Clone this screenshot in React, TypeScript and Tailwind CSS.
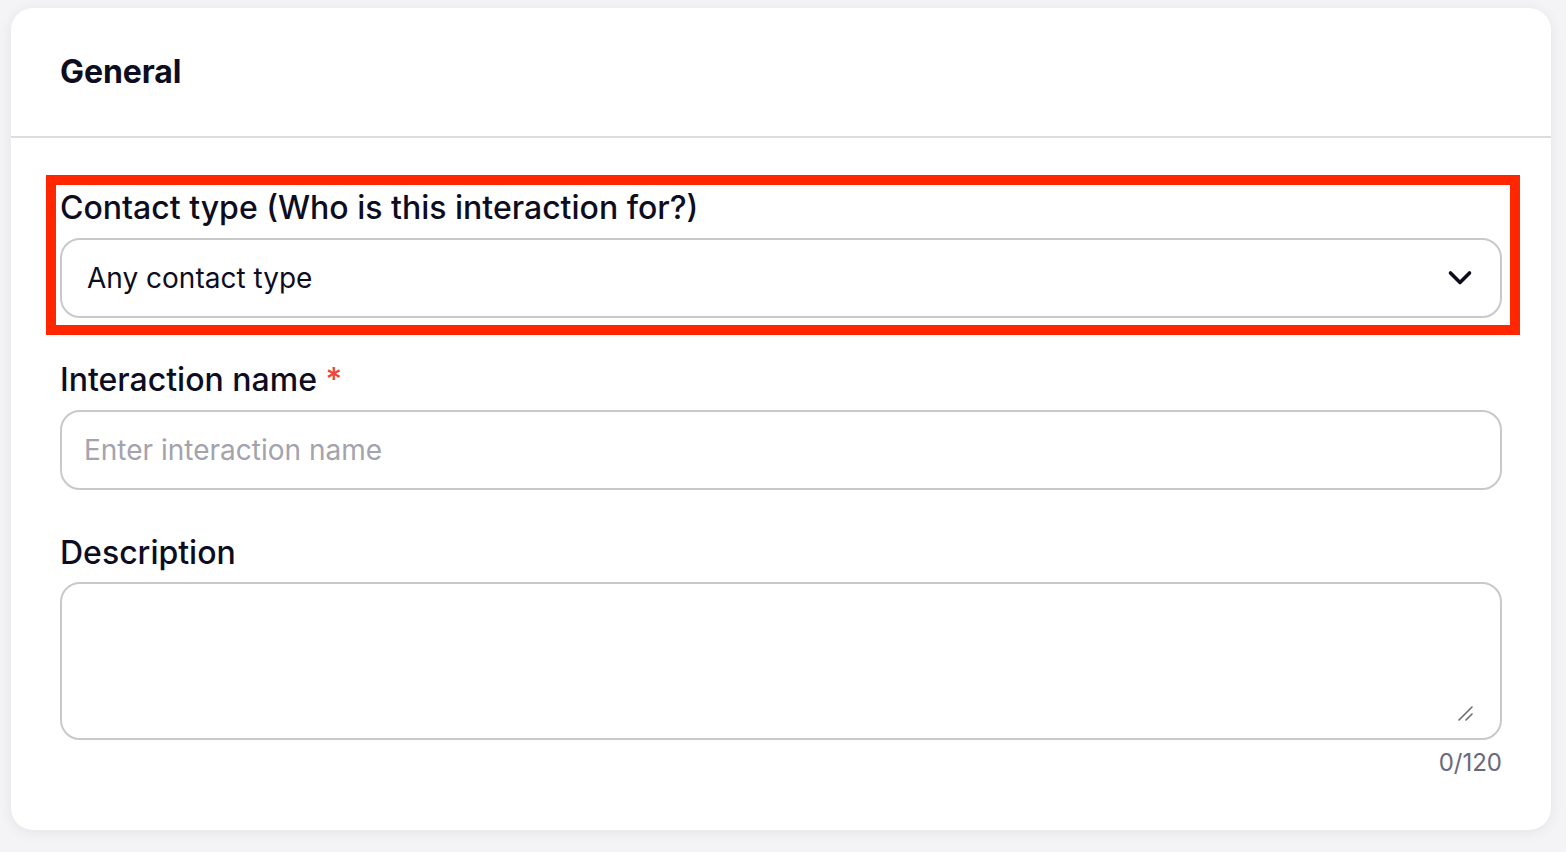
import { useState } from "react";

function Chevron() {
  return (
    <svg width="26" height="18" viewBox="0 0 26 18" fill="none" className="text-[#0d0d1f]">
      <polyline
        points="3.5,4 13,13.5 22.5,4"
        stroke="currentColor"
        strokeWidth="3.6"
        strokeLinecap="round"
        strokeLinejoin="round"
      />
    </svg>
  );
}

function ResizeGrip() {
  return (
    <svg width="16" height="16" viewBox="0 0 16 16" fill="none">
      <line x1="1" y1="15" x2="14" y2="2" stroke="#6b6b6b" strokeWidth="1.6" strokeLinecap="round" />
      <line x1="8" y1="15" x2="14" y2="9" stroke="#6b6b6b" strokeWidth="1.6" strokeLinecap="round" />
    </svg>
  );
}

export default function App() {
  const [name, setName] = useState("");
  const [desc, setDesc] = useState("");

  return (
    <div
      className="min-h-screen bg-[#f4f4f6] px-[11px] pt-[8px] pb-[22px]"
      style={{ fontFamily: "Inter, 'Noto Sans', sans-serif" }}
    >
      <div className="bg-white rounded-[22px] shadow-[0_2px_14px_rgba(20,20,60,0.07)] w-[1540px]">
        {/* header */}
        <div className="h-[130px] flex items-center px-[49px] border-b-2 border-[#dcdce1]">
          <h2 className="text-[32px] leading-[40px] font-bold text-[#0d0d1f] tracking-[-0.1px]">General</h2>
        </div>

        <div className="px-[49px] pt-[48px] pb-[52px] text-[#0d0d1f]">
          {/* contact type (highlighted) */}
          <div className="relative">
            <div className="absolute -left-[14px] -right-[18px] -top-[11px] -bottom-[17px] border-[10px] border-[#ff2600] pointer-events-none" />
            <label className="block pt-[3px] text-[32px] leading-[38px] font-medium mb-[11px]">
              Contact type (Who is this interaction for?)
            </label>
            <button className="w-full h-[80px] flex items-center justify-between pl-[25px] pr-[27px] border-2 border-[#c9c9c9] rounded-[20px] bg-white text-left">
              <span className="text-[28px] leading-[34px]">Any contact type</span>
              <Chevron />
            </button>
          </div>

          {/* interaction name */}
          <div className="mt-[41px]">
            <label className="block pt-[2px] text-[32px] leading-[38px] font-medium mb-[11px]">
              Interaction name <span className="text-[#f04438]">*</span>
            </label>
            <input
              value={name}
              onChange={(e) => setName(e.target.value)}
              placeholder="Enter interaction name"
              className="w-full h-[80px] px-[22px] border-2 border-[#c9c9c9] rounded-[20px] text-[28px] outline-none placeholder:text-[#a3a3ad]"
            />
          </div>

          {/* description */}
          <div className="mt-[41px]">
            <label className="block pt-[3px] text-[32px] leading-[38px] font-medium mb-[10px]">Description</label>
            <div className="relative">
              <textarea
                value={desc}
                onChange={(e) => setDesc(e.target.value)}
                maxLength={120}
                className="block w-full h-[158px] px-[22px] py-[16px] border-2 border-[#c9c9c9] rounded-[20px] text-[28px] outline-none resize-none"
              />
              <div className="absolute right-[28px] bottom-[19px] pointer-events-none">
                <ResizeGrip />
              </div>
            </div>
            <div className="text-right text-[24px] leading-[30px] text-[#68687c] mt-[8px]">
              {desc.length}/120
            </div>
          </div>
        </div>
      </div>
    </div>
  );
}
